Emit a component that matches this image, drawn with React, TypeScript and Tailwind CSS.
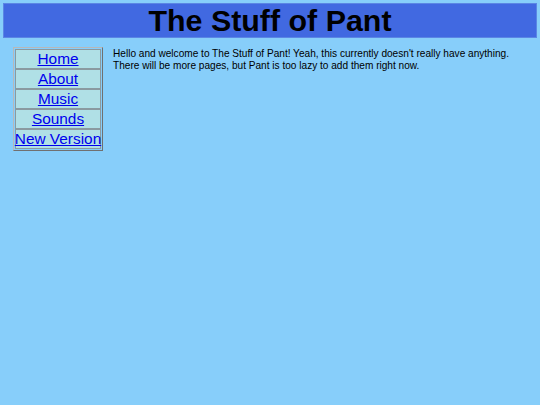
export default function App() {
  const links = ["Home", "About", "Music", "Sounds", "New Version"];

  return (
    <div className="min-h-[405px] bg-[#87cefa] p-[3px] font-['Liberation_Sans',Arial,sans-serif] text-black">
      {/* Header */}
      <div className="h-[35px] border border-[#5b86e4] bg-[#4169e1] flex items-center justify-center">
        <h1 className="text-[30.4px] font-bold leading-none">The Stuff of Pant</h1>
      </div>

      <div className="flex items-start mt-[9px] pl-[10px]">
        {/* Nav */}
        <div className="w-[90px] shrink-0 border border-t-[#b8b8b8] border-l-[#b8b8b8] border-r-[#707070] border-b-[#707070] p-px">
          {links.map((l) => (
            <div
              key={l}
              className="h-[20px] border border-[#8a9aa0] bg-[#b0e0e6] flex items-center justify-center whitespace-nowrap"
            >
              <a href="#" className="text-[15.4px] leading-none text-[#0000ee] underline">
                {l}
              </a>
            </div>
          ))}
        </div>

        {/* Content */}
        <p className="ml-[10px] text-[10.1px] leading-[12px] pt-px whitespace-nowrap">
          Hello and welcome to The Stuff of Pant! Yeah, this currently doesn't really have anything.
          <br />
          There will be more pages, but Pant is too lazy to add them right now.
        </p>
      </div>
    </div>
  );
}
